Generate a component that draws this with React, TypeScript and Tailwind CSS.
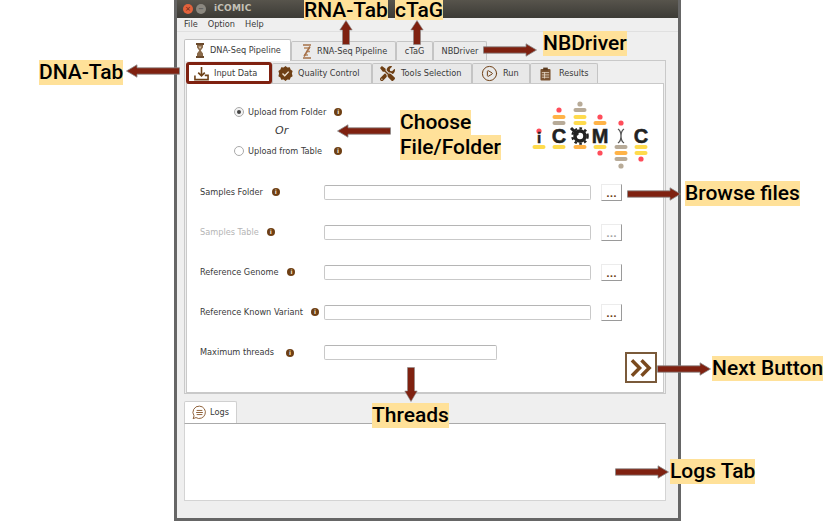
import type { ReactNode } from "react";
import { CirclePlay } from "lucide-react";
import { FaTools } from "react-icons/fa";

const BROWN = "#6e4218";

function HArrow({ flip, className }: { flip?: boolean; className: string }) {
  return (
    <svg viewBox="0 0 54 14" className={`absolute w-[54px] h-[14px] ${flip ? "-scale-x-100" : ""} ${className}`}>
      <path d="M0.5 3.8H43V0.8L53.5 7L43 13.2V10.2H0.5Z" fill="#7f2110" stroke="#8a8a8a" strokeWidth="0.8" />
    </svg>
  );
}

function UpArrow({ className }: { className: string }) {
  return (
    <svg viewBox="0 0 14 25" className={`absolute w-[14px] h-[25px] ${className}`}>
      <path d="M3.5 24.5V10H0.8L7 0.5L13.2 10H10.5V24.5Z" fill="#7f2110" stroke="#8a8a8a" strokeWidth="0.6" />
    </svg>
  );
}

function DownArrow({ className }: { className: string }) {
  return (
    <svg viewBox="0 0 14 35" className={`absolute w-[14px] h-[35px] ${className}`}>
      <path d="M3.5 0.5V24H0.8L7 34.5L13.2 24H10.5V0.5Z" fill="#7f2110" stroke="#8a8a8a" strokeWidth="0.6" />
    </svg>
  );
}

function Callout({ children, className }: { children: ReactNode; className: string }) {
  return (
    <span className={`absolute bg-[#ffe199] text-black text-[21px] font-medium whitespace-nowrap font-['Roboto',sans-serif] ${className}`}>
      {children}
    </span>
  );
}

function Info({ className = "" }: { className?: string }) {
  return (
    <span className={`inline-flex w-[8px] h-[8px] flex-none rounded-full bg-[#6e3f14] items-center justify-center text-[6px] leading-none font-bold text-[#f3e6d5] ${className}`}>
      i
    </span>
  );
}

function DnaIcon() {
  return (
    <svg viewBox="0 0 10 15" className="w-[10px] h-[15px] flex-none">
      <path d="M1 1H9M1 14H9" stroke="#6b4a2c" strokeWidth="1.8" />
      <path d="M2 2H8V4.5L5.8 7.5L8 10.5V13H2V10.5L4.2 7.5L2 4.5Z" fill="#8a6a4a" />
      <path d="M3.4 3.4H6.6L5 6Z" fill="#d9c6b0" />
    </svg>
  );
}

function RnaIcon() {
  return (
    <svg viewBox="0 0 10 15" className="w-[10px] h-[15px] flex-none">
      <path d="M1 1H9M1 14H9" stroke="#a5714a" strokeWidth="1.6" />
      <path d="M2 4H8M4 7.5H8M2 11H6" stroke="#b98a62" strokeWidth="1.3" />
      <path d="M8 2.5L2 12.5" stroke="#a5714a" strokeWidth="1.6" />
    </svg>
  );
}

function MainTab({ icon, label, active, className }: { icon?: ReactNode; label: string; active?: boolean; className: string }) {
  return (
    <div className={`flex items-center border border-b-0 border-[#c4c4c4] rounded-t-[2px] ${active ? "bg-white h-[22px] relative z-10" : "bg-[#ebebeb] h-[19px] self-end"} ${className}`}>
      {icon}
      <span>{label}</span>
    </div>
  );
}

function SubTab({ icon, label, className }: { icon: ReactNode; label: string; className: string }) {
  return (
    <div className={`flex items-center h-[20px] border border-b-0 border-[#c4c4c4] bg-[#e8e8e8] rounded-t-[2px] ${className}`}>
      {icon}
      <span>{label}</span>
    </div>
  );
}

function FieldRow({ label, disabled, infoGap, className = "" }: { label: string; disabled?: boolean; infoGap: string; className?: string }) {
  return (
    <div className={`flex items-center h-[17px] pl-[13px] ${className}`}>
      <div className="w-[124px] flex items-center flex-none">
        <span className={disabled ? "text-[#b5b5b5]" : ""}>{label}</span>
        <Info className={infoGap} />
      </div>
      <div className="w-[267px] h-[15px] bg-white border border-[#c9c9c9] border-t-[#b5b5b5] rounded-[2px] flex-none" />
      <div className={`ml-[10px] w-[21px] h-[17px] flex-none bg-white border-r border-b border-r-[#9a9a9a] border-b-[#9a9a9a] border-l border-t border-l-[#ececec] border-t-[#ececec] flex items-end justify-center text-[9px] leading-[12px] font-bold ${disabled ? "text-[#a5a5a5]" : "text-[#6e3f14]"}`}>
        ...
      </div>
    </div>
  );
}

function Logo() {
  const pill = (x: number, y: number, color: string) => (
    <rect key={`${x}-${y}`} x={x - 6.5} y={y - 2} width="13" height="4" rx="2" fill={color} />
  );
  const dot = (x: number, y: number, color: string) => (
    <circle key={`d${x}-${y}`} cx={x} cy={y} r="2.6" fill={color} />
  );
  const yellow = "#ffdb4d";
  const orange = "#ffb347";
  const grey = "#b8ab98";
  const red = "#ff4d5a";
  return (
    <svg viewBox="0 0 120 72" className="w-[120px] h-[72px] flex-none">
      {dot(9, 31, red)}
      {pill(9, 47, yellow)}
      {dot(29, 10, red)}
      {pill(29, 17, orange)}
      {pill(29, 23, grey)}
      {pill(29, 47, yellow)}
      {dot(50, 4, grey)}
      {pill(50, 10, grey)}
      {pill(50, 17, yellow)}
      {pill(50, 23, yellow)}
      {pill(50, 47, orange)}
      {dot(70, 17, red)}
      {pill(70, 23, orange)}
      {pill(70, 47, yellow)}
      {dot(70, 53, red)}
      {dot(91, 23, red)}
      {pill(91, 47, grey)}
      {pill(91, 53, orange)}
      {pill(91, 59, grey)}
      {dot(91, 66, grey)}
      {pill(111, 47, yellow)}
      {pill(111, 53, yellow)}
      {dot(111, 59, red)}
      <g fontFamily="'Liberation Sans', sans-serif" fontWeight="700" fill="#222" stroke="#222" strokeWidth="0.5" textAnchor="middle">
        <text x="9" y="43" fontSize="15">i</text>
        <text x="29" y="43" fontSize="20">C</text>
        <text x="70" y="43" fontSize="20">M</text>
        <text x="111" y="43" fontSize="20">C</text>
      </g>
      {/* gear with wrench */}
      <circle cx="50" cy="36" r="5" fill="none" stroke="#222" strokeWidth="3.6" />
      <circle cx="50" cy="36" r="7.6" fill="none" stroke="#222" strokeWidth="2.4" strokeDasharray="2.6 2.4" />
      <path d="M41 28L48 35" stroke="#222" strokeWidth="3" />
      {/* dna */}
      <path d="M88 29C94 33 88 39 94 43M94 29C88 33 94 39 88 43" fill="none" stroke="#555" strokeWidth="1.3" />
    </svg>
  );
}

export default function App() {
  return (
    <div className="relative w-[831px] h-[522px] bg-white overflow-hidden font-['DejaVu_Sans',sans-serif] text-[8.2px] text-[#3a3a3a]">
      {/* app window */}
      <div className="ml-[174px] w-[507px] h-[521px] flex flex-col bg-[#efefef] border-x-[3px] border-b-[3px] border-[#666]">
        <div className="h-[18px] flex-none flex items-center bg-gradient-to-b from-[#57544c] to-[#3c3b36] pl-[6px]">
          <span className="w-[10px] h-[10px] rounded-full bg-[#e2623c] flex items-center justify-center text-[7px] leading-none text-[#5a2010]">×</span>
          <span className="ml-[3px] w-[10px] h-[10px] rounded-full bg-[#8b8880] flex items-center justify-center text-[7px] leading-none text-[#444]">−</span>
          <span className="ml-[8px] text-[9px] tracking-[0.2px] font-bold text-[#c4c1b6]">iCOMIC</span>
        </div>
        <div className="h-[14px] flex-none flex items-center gap-[10px] pl-[7px] border-b border-[#e0e0e0]">
          <span>File</span>
          <span>Option</span>
          <span>Help</span>
        </div>

        <div className="flex-none pl-[7px] pr-[12px] pt-[7px]">
          <div className="flex h-[21px] items-start">
            <MainTab active label="DNA-Seq Pipeline" icon={<DnaIcon />} className="w-[107px] pl-[10px] gap-[5px]" />
            <div className="flex h-[21px] items-end">
              <MainTab label="RNA-Seq Pipeline" icon={<RnaIcon />} className="w-[105px] pl-[10px] gap-[5px]" />
              <MainTab label="cTaG" className="w-[37px] justify-center" />
              <MainTab label="NBDriver" className="w-[54px] justify-center" />
            </div>
          </div>

          <div className="h-[334px] border border-[#c9c9c9] pl-px pt-[2px]">
            <div className="flex h-[20px]">
              <div className="relative -mt-px flex items-center pl-[5px] gap-[5px] w-[86px] h-[22px] bg-white border-[3px] border-[#7f2110] rounded-[3px] z-10">
                <svg viewBox="0 0 16 16" className="w-[15px] h-[15px]" fill="none" stroke={BROWN} strokeWidth="1.7">
                  <path d="M8 1V10M4.5 7L8 10.5L11.5 7M1 10V14.5H15V10H11.5" />
                </svg>
                <span>Input Data</span>
              </div>
              <SubTab
                label="Quality Control"
                className="w-[100px] pl-[5px] gap-[5px]"
                icon={
                  <svg viewBox="0 0 16 16" className="w-[15px] h-[15px]">
                    <path d="M8 0L10 1.6L12.6 1.4L13.4 3.8L15.6 5.2L14.8 8L15.6 10.8L13.4 12.2L12.6 14.6L10 14.4L8 16L6 14.4L3.4 14.6L2.6 12.2L.4 10.8L1.2 8L.4 5.2L2.6 3.8L3.4 1.4L6 1.6Z" fill="#6e3f14" />
                    <path d="M4.8 8L7.2 10.4L11.4 6" fill="none" stroke="#f0e3d2" strokeWidth="1.5" />
                  </svg>
                }
              />
              <SubTab label="Tools Selection" className="w-[100px] pl-[7px] gap-[6px]" icon={<FaTools className="w-[15px] h-[15px] text-[#6e3f14]" />} />
              <SubTab label="Run" className="w-[58px] pl-[8px] gap-[5px]" icon={<CirclePlay className="w-[17px] h-[17px] text-[#6e3f14]" strokeWidth={1.4} />} />
              <SubTab
                label="Results"
                className="w-[68px] pl-[9px] gap-[8px]"
                icon={
                  <svg viewBox="0 0 12 14" className="w-[11px] h-[14px]">
                    <rect x="0.5" y="1.5" width="11" height="12.5" rx="1" fill="#7a5230" />
                    <rect x="3.5" y="0" width="5" height="3" fill="#5a3a1e" />
                    <path d="M2 5.5H10M2 8H10M2 10.5H10M5 5V12" stroke="#e9dccb" strokeWidth="0.9" />
                  </svg>
                }
              />
            </div>

            <div className="h-[310px] bg-white border border-[#c9c9c9] mr-px">
              <div className="flex h-[100px]">
                <div className="w-[343px] pl-[47px] pt-[20px]">
                  <div className="flex items-center h-[16px]">
                    <span className="w-[10px] h-[10px] rounded-full border border-[#aaa] bg-[#f3f3f3] flex items-center justify-center">
                      <span className="w-[4px] h-[4px] rounded-full bg-[#444]" />
                    </span>
                    <span className="ml-[4px]">Upload from Folder</span>
                    <Info className="ml-[8px]" />
                  </div>
                  <div className="h-[16px] mt-[3px] pl-[41px] text-[11px] leading-[16px] italic">Or</div>
                  <div className="flex items-center h-[16px] mt-[4px]">
                    <span className="w-[10px] h-[10px] rounded-full border border-[#aaa] bg-white" />
                    <span className="ml-[4px]">Upload from Table</span>
                    <Info className="ml-[12px]" />
                  </div>
                </div>
                <div className="pt-[16px]">
                  <Logo />
                </div>
              </div>

              <FieldRow label="Samples Folder" infoGap="ml-[9px]" />
              <FieldRow label="Samples Table" disabled infoGap="ml-[8px]" className="mt-[23px]" />
              <FieldRow label="Reference Genome" infoGap="ml-[9px]" className="mt-[23px]" />
              <FieldRow label="Reference Known Variant" infoGap="ml-[8px]" className="mt-[23px]" />

              <div className="flex items-start h-[17px] pl-[13px] mt-[23px]">
                <div className="w-[124px] flex items-center h-[17px] flex-none">
                  <span>Maximum threads</span>
                  <Info className="ml-[12px]" />
                </div>
                <div className="w-[173px] h-[15px] mt-px bg-white border border-[#c9c9c9] border-t-[#b5b5b5] rounded-[2px] flex-none" />
                <div className="ml-[128px] mt-[8px] w-[32px] h-[31px] flex-none border-2 border-[#7a5a3a] bg-white flex items-center justify-center">
                  <svg viewBox="0 0 24 20" className="w-[23px] h-[20px]" fill="none" stroke="#7a4a1e" strokeWidth="3.6">
                    <path d="M2 2L10 10L2 18M12 2L20 10L12 18" />
                  </svg>
                </div>
              </div>
            </div>
          </div>

          <div className="mt-[7px] w-[53px] h-[22px] flex items-center justify-center gap-[3px] bg-white border border-b-0 border-[#d0d0d0] rounded-t-[2px]">
            <svg viewBox="0 0 16 16" className="w-[15px] h-[15px]" fill="none" stroke="#8a5a30" strokeWidth="1">
              <path d="M8 1.2A6.6 6.6 0 1 1 4.2 13.4L1.2 14.6L2.2 11.6A6.6 6.6 0 0 1 8 1.2Z" />
              <path d="M5 5.8H11M4.4 8H11.6M5 10.2H11" />
            </svg>
            <span>Logs</span>
          </div>
          <div className="h-[78px] bg-white border-t border-t-[#aaa] border-x border-b border-x-[#d4d4d4] border-b-[#d4d4d4]" />
        </div>
      </div>

      {/* annotations */}
      <Callout className="left-[304px] top-0 h-[20px] leading-[20px]">RNA-Tab</Callout>
      <Callout className="left-[395px] top-0 h-[20px] leading-[20px]">cTaG</Callout>
      <Callout className="left-[543px] top-[31px] leading-[25px]">NBDriver</Callout>
      <Callout className="left-[39px] top-[60px] leading-[25px]">DNA-Tab</Callout>
      <Callout className="left-[400px] top-[110px] leading-[25px]">Choose</Callout>
      <Callout className="left-[400px] top-[135px] leading-[25px]">File/Folder</Callout>
      <Callout className="left-[685px] top-[181px] leading-[25px]">Browse files</Callout>
      <Callout className="left-[712px] top-[356px] leading-[25px]">Next Button</Callout>
      <Callout className="left-[372px] top-[403px] leading-[25px]">Threads</Callout>
      <Callout className="left-[670px] top-[459px] leading-[25px]">Logs Tab</Callout>

      <UpArrow className="left-[339px] top-[20px]" />
      <UpArrow className="left-[410px] top-[20px]" />
      <HArrow className="left-[483px] top-[43px]" />
      <HArrow flip className="left-[126px] top-[64px]" />
      <HArrow flip className="left-[337px] top-[124px]" />
      <HArrow className="left-[627px] top-[187px]" />
      <HArrow className="left-[657px] top-[362px]" />
      <DownArrow className="left-[404px] top-[367px]" />
      <HArrow className="left-[615px] top-[465px]" />
    </div>
  );
}
